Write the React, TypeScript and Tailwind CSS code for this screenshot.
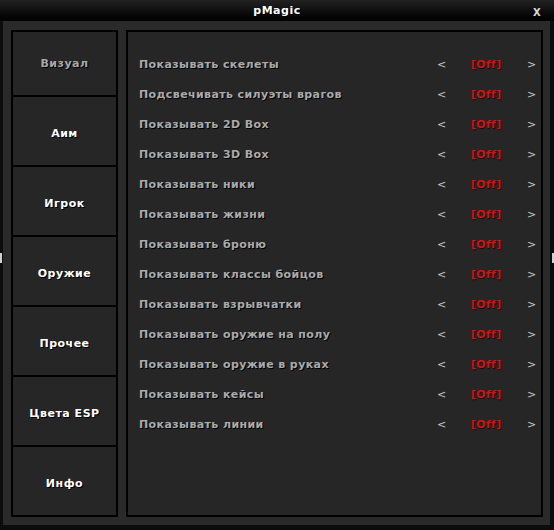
import React from "react";

const tabs = ["Визуал", "Аим", "Игрок", "Оружие", "Прочее", "Цвета ESP", "Инфо"];
const rows = [
  "Показывать скелеты",
  "Подсвечивать силуэты врагов",
  "Показывать 2D Box",
  "Показывать 3D Box",
  "Показывать ники",
  "Показывать жизни",
  "Показывать броню",
  "Показывать классы бойцов",
  "Показывать взрывчатки",
  "Показывать оружие на полу",
  "Показывать оружие в руках",
  "Показывать кейсы",
  "Показывать линии",
];

const font = { fontFamily: '"DejaVu Sans", Verdana, sans-serif' };

export default function App() {
  return (
    <div
      className="relative w-[554px] h-[530px] bg-[#0c0c0c] flex flex-col pl-[3px] pr-[4px] pb-[5px]"
      style={font}
    >
      <div className="absolute left-0 top-[253px] w-[2px] h-[10px] bg-[#d0d0d0]" />
      <div className="absolute right-0 top-[253px] w-[2px] h-[10px] bg-[#d0d0d0]" />
      <div className="h-[22px] -ml-[3px] -mr-[4px] pt-[2px] bg-gradient-to-b from-[#222222] to-[#020202] flex items-center justify-center relative">
        <span className="text-white font-bold text-[11px] tracking-[0.5px] [text-shadow:1px_1px_0_#000]">pMagic</span>
        <span className="absolute left-[533px] top-[5px] text-[#d8d8d8] font-bold text-[10px]">X</span>
      </div>
      <div className="flex-1 bg-[#2a2a2a] flex pl-[8px] pt-[9px] pr-[7px] pb-[8px] gap-[8px]">
        <div className="w-[107px] border-2 border-black bg-[#262626] flex flex-col">
          {tabs.map((t, i) => (
            <div
              key={t}
              className={`${i === 0 ? "h-[63px] pt-[2px]" : "h-[70px] pt-[6px] border-t-2 border-black"} flex items-center justify-center shrink-0`}
            >
              <span
                className={`font-bold text-[11px] tracking-[0.5px] [text-shadow:1px_1px_0_#000] ${
                  i === 0 ? "text-[#a9a9a9]" : "text-white"
                }`}
              >
                {t}
              </span>
            </div>
          ))}
        </div>
        <div className="flex-1 border-2 border-black bg-[#262626] pt-[18px]">
          {rows.map((r) => (
            <div key={r} className="h-[30px] flex items-center pl-[11px]">
              <span className="flex-1 text-[#ababab] font-bold text-[11px] tracking-[0.4px] [text-shadow:1px_1px_0_#000]">
                {r}
              </span>
              <div className="w-[104px] flex items-center">
                <span className="w-[34px] text-[#c8c8c8] text-[11px]">&lt;</span>
                <span className="w-[56px] text-[#c81818] font-bold text-[11px] tracking-[0.3px] [text-shadow:1px_1px_0_#300]">
                  [Off]
                </span>
                <span className="text-[#c8c8c8] text-[11px]">&gt;</span>
              </div>
            </div>
          ))}
        </div>
      </div>
    </div>
  );
}
